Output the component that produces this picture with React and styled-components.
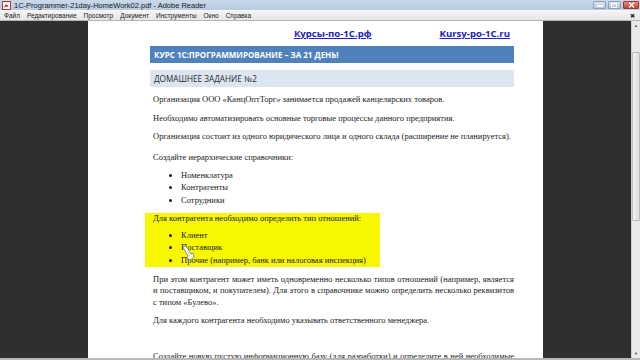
import React from 'react';
import styled, { createGlobalStyle } from 'styled-components';

const GlobalStyle = createGlobalStyle`
    html, body {
        margin: 0;
        padding: 0;
        width: 640px;
        height: 360px;
        overflow: hidden;
        background: #2f2f2f;
    }
`;

const menuItems = ['Файл', 'Редактирование', 'Просмотр', 'Документ', 'Инструменты', 'Окно', 'Справка'];

const PdfIcon = () => (
    <svg width="9" height="9" viewBox="0 0 9 9">
        <rect x="0.5" y="0.5" width="8" height="8" fill="#fff" stroke="#b33" />
        <path d="M2 6.5 C3 3, 5 2, 6.5 6 C5 5, 3.5 5.5, 2 6.5Z" fill="#c22" />
    </svg>
);

const Cursor = () => (
    <svg width="13" height="16" viewBox="0 0 13 16">
        <path d="M1 2 L4 1 L9 9 L11 8 L12 12 L8 15 L5 13 L6 11 Z" fill="#fff" stroke="#7a7a7a" strokeWidth="0.8" />
        <path d="M5 6 L8 11 M7 5.5 L9.5 10" stroke="#aaa" strokeWidth="0.6" />
    </svg>
);

class App extends React.Component {
    render() {
        return (
            <Window>
                <GlobalStyle />
                <TitleBar>
                    <PdfIcon />
                    <Title>1C-Programmer-21day-HomeWork02.pdf - Adobe Reader</Title>
                    <WinButtons>
                        <WinButton>
                            <svg width="6" height="3"><rect x="0" y="1" width="6" height="2" fill="#fff" /></svg>
                        </WinButton>
                        <WinButton>
                            <svg width="7" height="6"><rect x="0.5" y="1.5" width="5" height="4" fill="none" stroke="#fff" /></svg>
                        </WinButton>
                        <WinButton close>
                            <svg width="7" height="6"><path d="M1 0.5 L6 5.5 M6 0.5 L1 5.5" stroke="#fff" strokeWidth="1.4" /></svg>
                        </WinButton>
                    </WinButtons>
                </TitleBar>
                <MenuBar>
                    {menuItems.map((m) => (
                        <MenuItem key={m}>{m}</MenuItem>
                    ))}
                    <MenuClose>✖</MenuClose>
                </MenuBar>
                <Workspace>
                    <Gutter />
                    <Page>
                        <Links>
                            <Link>Курсы-по-1С.рф</Link>
                            <Link>Kursy-po-1C.ru</Link>
                        </Links>
                        <Banner>КУРС 1С:ПРОГРАММИРОВАНИЕ – ЗА 21 ДЕНЬ!</Banner>
                        <Heading>ДОМАШНЕЕ ЗАДАНИЕ №2</Heading>
                        <Para>Организация ООО «КанцОптТорг» занимается продажей канцелярских товаров.</Para>
                        <Para>Необходимо автоматизировать основные торговые процессы данного предприятия.</Para>
                        <Para gap="9px">Организация состоит из одного юридического лица и одного склада (расширение не планируется).</Para>
                        <Para gap="6px">Создайте иерархические справочники:</Para>
                        <List>
                            <li>Номенклатура</li>
                            <li>Контрагенты</li>
                            <li>Сотрудники</li>
                        </List>
                        <Highlight>
                            <Para gap="4px">Для контрагента необходимо определить тип отношений:</Para>
                            <List>
                                <li>Клиент</li>
                                <li>Поставщик</li>
                                <li>Прочие (например, банк или налоговая инспекция)</li>
                            </List>
                            <CursorMark><Cursor /></CursorMark>
                        </Highlight>
                        <Para>
                            <Line full>При этом контрагент может иметь одновременно несколько типов отношений (например, является</Line>
                            <Line full>и поставщиком, и покупателем). Для этого в справочнике можно определить несколько реквизитов</Line>
                            <Line>с типом «Булево».</Line>
                        </Para>
                        <Para>Для каждого контрагента необходимо указывать ответственного менеджера.</Para>
                        <Spacer />
                        <Para>
                            <Line full>Создайте новую пустую информационную базу (для разработки) и определите в ней необходимые</Line>
                        </Para>
                    </Page>
                    <Gutter />
                    <Scrollbar>
                        <ScrollArrow>▲</ScrollArrow>
                        <Thumb />
                        <ScrollTrack />
                        <ScrollArrow>▼</ScrollArrow>
                    </Scrollbar>
                </Workspace>
                <BottomStrip />
            </Window>
        );
    }
}

/* ----------------- Styles ----------------- */
const Window = styled.div`
    width: 640px;
    height: 360px;
    display: flex;
    flex-direction: column;
    overflow: hidden;
    font-family: "Liberation Sans", Arial, sans-serif;
`;

const TitleBar = styled.div`
    height: 10px;
    display: flex;
    align-items: center;
    padding-left: 2px;
    gap: 3px;
    background: linear-gradient(to bottom, #c9d9ea, #b7cbe0);
`;

const Title = styled.span`
    font-size: 7.5px;
    color: #1b1b1b;
    flex: 1;
    white-space: nowrap;
`;

const WinButtons = styled.div`
    display: flex;
    gap: 2px;
    align-self: flex-start;
    padding-top: 1px;
    padding-right: 1px;
`;

const WinButton = styled.div`
    width: ${(p) => (p.close ? '16px' : '13px')};
    height: 8px;
    border-radius: 1px;
    display: flex;
    align-items: center;
    justify-content: center;
    border: 1px solid ${(p) => (p.close ? '#a33' : '#8aa0b8')};
    box-sizing: border-box;
    background: ${(p) => (p.close ? 'linear-gradient(#e48d80, #c6412c)' : 'linear-gradient(#dce6f0, #b4c6da)')};
`;

const MenuBar = styled.div`
    height: 9px;
    display: flex;
    align-items: center;
    gap: 7px;
    padding-left: 4px;
    background: linear-gradient(to bottom, #f4f4f4, #e6e6e6);
    border-top: 1px solid #fafafa;
    border-bottom: 1px solid #b5b5b5;
`;

const MenuItem = styled.span`
    font-size: 6.5px;
    color: #222;
`;

const MenuClose = styled.span`
    margin-left: auto;
    margin-right: 5px;
    font-size: 6px;
    color: #222;
`;

const Workspace = styled.div`
    flex: 1;
    display: flex;
    min-height: 0;
    background: #2f2f2f;
`;

const Gutter = styled.div`
    width: 88px;
    flex-shrink: 0;
    background: #2f2f2f;
`;

const Page = styled.div`
    width: 455px;
    flex-shrink: 0;
    background: #fff;
    box-sizing: border-box;
    padding: 7px 29px 0 62px;
    overflow: hidden;
    font-family: "Liberation Serif", "Times New Roman", serif;
    font-size: 8.5px;
    line-height: 11.5px;
    color: #1a1a1a;
`;

const Links = styled.div`
    display: flex;
    justify-content: flex-end;
    gap: 68px;
    padding-right: 4px;
    height: 13px;
    margin-bottom: 5px;
`;

const Link = styled.span`
    font-family: "Open Sans", "Liberation Sans", sans-serif;
    font-weight: 700;
    font-size: 9.6px;
    color: #2222c4;
    text-decoration: underline;
`;

const Banner = styled.div`
    height: 17px;
    display: flex;
    align-items: center;
    padding-left: 4px;
    background: #4f81bd;
    color: #fff;
    font-family: "Open Sans", "Liberation Sans", sans-serif;
    font-weight: 700;
    font-size: 8px;
    margin-bottom: 7px;
`;

const Heading = styled.div`
    height: 17px;
    display: flex;
    align-items: center;
    padding-left: 4px;
    background: #dce6f1;
    color: #2a2a2a;
    font-family: "Open Sans", "Liberation Sans", sans-serif;
    font-size: 8.2px;
    margin-bottom: 7px;
`;

const Para = styled.p`
    margin: 0 0 ${(p) => p.gap || '7px'} 0;
    padding-left: 3px;
`;

const Line = styled.span`
    display: block;
    text-align: justify;
    text-align-last: ${(p) => (p.full ? 'justify' : 'left')};
    white-space: nowrap;
`;

const List = styled.ul`
    margin: 0 0 7px 0;
    padding-left: 31px;
    list-style: disc;
    line-height: 12.4px;
`;

const Highlight = styled.div`
    position: relative;
    width: 235px;
    margin-left: -5px;
    padding: 0 0 1px 5px;
    background: #f7f700;
    margin-bottom: 7px;
    box-sizing: border-box;

    ${List} {
        margin-bottom: 0;
    }
`;

const CursorMark = styled.div`
    position: absolute;
    left: 37px;
    top: 32px;
`;

const Spacer = styled.div`
    height: 17px;
`;

const Scrollbar = styled.div`
    width: 9px;
    display: flex;
    flex-direction: column;
    background: #e9e9e9;
    border-left: 1px solid #cfcfcf;
    box-sizing: border-box;
`;

const ScrollArrow = styled.div`
    height: 9px;
    font-size: 4px;
    color: #444;
    display: flex;
    align-items: center;
    justify-content: center;
`;

const Thumb = styled.div`
    height: 167px;
    margin: 22px 0 0 0;
    background: linear-gradient(to right, #f3f3f3, #dcdcdc);
    border: 1px solid #bcbcbc;
    border-radius: 1px;
`;

const ScrollTrack = styled.div`
    flex: 1;
`;

const BottomStrip = styled.div`
    height: 2px;
    background: #b8b8b8;
`;

export default App;
